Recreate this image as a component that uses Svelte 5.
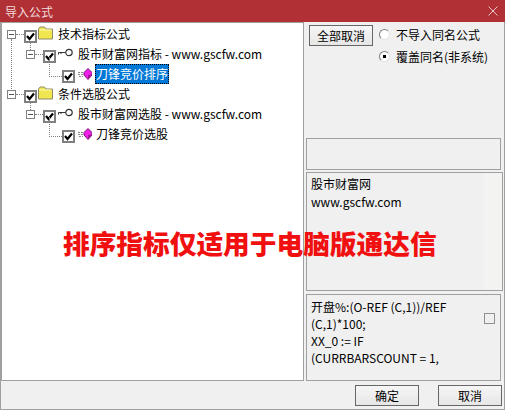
<script>
  const tree = [
    { depth: 0, icon: "folder", label: "技术指标公式", long: true },
    { depth: 1, icon: "key", label: "股市财富网指标 - www.gscfw.com" },
    { depth: 2, icon: "gem", label: "刀锋竞价排序", selected: true },
    { depth: 0, icon: "folder", label: "条件选股公式" },
    { depth: 1, icon: "key", label: "股市财富网选股 - www.gscfw.com" },
    { depth: 2, icon: "gem", label: "刀锋竞价选股" },
  ];
</script>

<div class="win">
  <header class="title">
    <span>导入公式</span>
    <svg class="close" width="10" height="10" viewBox="0 0 10 10"><path d="M0.5 0.5L9.5 9.5M9.5 0.5L0.5 9.5" stroke="#e8c8c8" fill="none" /></svg>
  </header>

  <div class="body">
    <div class="tree">
      {#each tree as row}
        <div class="row" class:d1={row.depth === 1} class:d2={row.depth === 2}>
          {#if row.depth < 2}
            <span class="exp" class:long={row.long}></span><span class="dots"></span>
          {:else}
            <span class="elbow"></span>
          {/if}
          <span class="chk">
            <svg width="9" height="9" viewBox="0 0 9 9"><path d="M1 4L3.5 7L8 1.5" stroke="#000" stroke-width="2.2" fill="none" /></svg>
          </span>
          {#if row.icon === "folder"}
            <svg class="ic folder" width="15" height="14" viewBox="0 0 15 14">
              <path d="M0.5 13V3L2 1H6.5L8 3H14.5V13Z" fill="#f0e650" stroke="#8f8a68" />
              <path d="M1.5 4H13.5" stroke="#fffbc0" />
            </svg>
          {:else if row.icon === "key"}
            <svg class="ic key" width="15" height="10" viewBox="0 0 15 10">
              <circle cx="11" cy="4.5" r="3.2" fill="#fff" stroke="#333" stroke-width="1.2" />
              <path d="M7.5 4.5H0.5V6.5M3 4.5V6" stroke="#333" fill="none" />
            </svg>
          {:else}
            <svg class="ic gem" width="14" height="12" viewBox="0 0 14 12">
              <path d="M0 4.5H5M0 6.5H5M1 8.5H5" stroke="#888" stroke-dasharray="2 1" />
              <path d="M10 0.5L14 4.5V7L10 11.5L6 7V4.5Z" fill="#f020e8" stroke="#7a1076" />
              <path d="M10 7L13.5 6.5L10 11Z" fill="#a01498" />
            </svg>
          {/if}
          <span class="label" class:sel={row.selected}>{row.label}</span>
        </div>
      {/each}
    </div>

    <aside class="side">
      <div class="top">
        <button class="btn">全部取消</button>
        <div class="radios">
          <label class="radio"><i></i>不导入同名公式</label>
          <label class="radio"><i class="on"></i>覆盖同名(非系统)</label>
        </div>
      </div>
      <div class="box empty"></div>
      <div class="box info">股市财富网<br />www.gscfw.com</div>
      <div class="box code">
        <p>开盘%:(O-REF (C,1))/REF<br />(C,1)*100;<br />XX_0 := IF<br />(CURRBARSCOUNT = 1,</p>
        <span class="mini"></span>
      </div>
    </aside>
  </div>

  <footer class="foot">
    <button class="btn">确定</button>
    <button class="btn">取消</button>
  </footer>

  <div class="banner">排序指标仅适用于电脑版通达信</div>
</div>

<style>
  :global(body) {
    margin: 0;
  }
  .win {
    position: relative;
    width: 505px;
    height: 410px;
    display: flex;
    flex-direction: column;
    background: #f0f0f0;
    font-family: "Noto Sans CJK SC", "Liberation Sans", sans-serif;
    font-size: 12px;
    color: #000;
    overflow: hidden;
  }
  .title {
    height: 22px;
    flex: none;
    background: #b03036;
    color: #f0dcdc;
    display: flex;
    align-items: center;
    justify-content: space-between;
    padding: 0 5px;
  }
  .close {
    margin-right: 2px;
  }
  .body {
    flex: 1;
    display: flex;
    min-height: 0;
    border: 1px solid #a0a0a0;
    border-width: 0 1px;
  }
  .tree {
    width: 303px;
    flex: none;
    background: #fff;
    border: 1px solid #a0a0a0;
    box-sizing: border-box;
    padding-top: 1px;
  }
  .row {
    position: relative;
    height: 20px;
    display: flex;
    align-items: center;
    padding-left: 5px;
    white-space: nowrap;
  }
  .row.d1 {
    padding-left: 24px;
  }
  .row.d2 {
    padding-left: 60px;
  }
  .exp {
    position: relative;
    width: 9px;
    height: 9px;
    border: 1px solid #808080;
    box-sizing: border-box;
    background: linear-gradient(#555, #555) center / 5px 1px no-repeat;
    flex: none;
  }
  /* tree connectors */
  .exp.long::after {
    content: "";
    position: absolute;
    left: 3px;
    top: 8px;
    height: 52px;
    border-left: 1px dotted #808080;
  }
  .d1 .exp::before {
    content: "";
    position: absolute;
    left: 3px;
    bottom: 8px;
    height: 8px;
    border-left: 1px dotted #808080;
  }
  .dots {
    width: 8px;
    flex: none;
    border-top: 1px dotted #808080;
  }
  .elbow {
    position: absolute;
    left: 47px;
    top: -7px;
    width: 12px;
    height: 19px;
    border-left: 1px dotted #808080;
    border-bottom: 1px dotted #808080;
  }
  .chk {
    position: relative;
    width: 13px;
    height: 13px;
    margin-top: 5px;
    border: 2px solid #808080;
    box-sizing: border-box;
    background: #fff;
    display: flex;
    align-items: center;
    justify-content: center;
    flex: none;
  }
  .chk svg {
    flex: none;
  }
  .ic {
    flex: none;
  }
  .folder {
    margin: 0 0 3px 1px;
  }
  .key {
    margin: 0 0 2px 2px;
  }
  .gem {
    margin: 0 0 0 3px;
  }
  .label {
    margin-left: 5px;
    line-height: 16px;
  }
  .gem + .label {
    margin-left: 3px;
    padding: 0 1px;
  }
  .sel {
    height: 20px;
    line-height: 20px;
    box-sizing: border-box;
    background: #0078d7;
    color: #fff;
    outline: 1px dotted #000;
    outline-offset: -1px;
  }
  .side {
    flex: 1;
    display: flex;
    flex-direction: column;
    padding: 3px 0 0 2px;
    min-width: 0;
  }
  .top {
    height: 113px;
    padding-left: 3px;
    display: flex;
    gap: 6px;
    align-items: flex-start;
    flex: none;
  }
  .btn {
    width: 64px;
    height: 21px;
    padding: 0;
    font: inherit;
    color: #000;
    border: 1px solid #666;
    background: linear-gradient(#f6f6f6, #e6e6e6);
  }
  .radios {
    display: flex;
    flex-direction: column;
    gap: 5px;
    margin-top: 1px;
  }
  .radio {
    height: 17px;
    display: flex;
    align-items: center;
    gap: 6px;
  }
  .radio i {
    width: 11px;
    height: 11px;
    box-sizing: border-box;
    border: 1px solid;
    border-color: #808080 #e4e4e4 #e4e4e4 #808080;
    border-radius: 50%;
    background: #fff;
    flex: none;
  }
  .radio i.on {
    background: radial-gradient(circle, #000 0 1.5px, #fff 2px);
  }
  .box {
    border: 1px solid #a0a0a0;
    box-sizing: border-box;
    flex: none;
  }
  .empty {
    height: 32px;
    margin-right: 3px;
  }
  .info {
    height: 119px;
    margin: 2px 1px 0 0;
    padding: 2px 4px;
    line-height: 18px;
    background: linear-gradient(90deg, #f0f0f0 177px, #f3f3f1 177px);
  }
  .code {
    height: 87px;
    margin: 3px 3px 0 0;
    padding: 3px 4px;
    display: flex;
    justify-content: space-between;
    line-height: 17px;
  }
  .code p {
    margin: 0;
  }
  .mini {
    width: 11px;
    height: 11px;
    box-sizing: border-box;
    margin: 15px 1px 0 0;
    border: 1px solid #909090;
    flex: none;
  }
  .foot {
    height: 28px;
    flex: none;
    display: flex;
    justify-content: flex-end;
    align-items: center;
    gap: 19px;
    padding-right: 2px;
    border: 1px solid #a0a0a0;
    border-top: 0;
  }
  .banner {
    position: absolute;
    left: 63px;
    top: 226px;
    color: #f01010;
    font-size: 26.7px;
    font-weight: 900;
    line-height: 34px;
    white-space: nowrap;
  }
</style>
